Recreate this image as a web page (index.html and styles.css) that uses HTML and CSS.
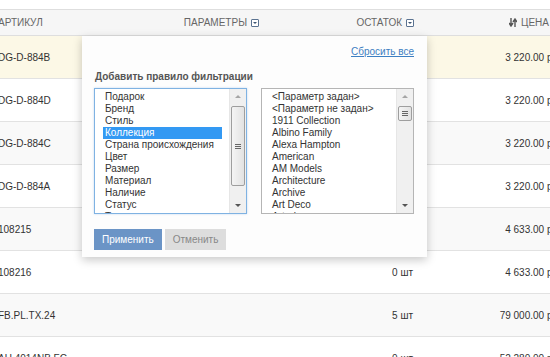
FILE: index.html
```html
<!DOCTYPE html>
<html lang="ru">
<head>
    <meta charset="UTF-8">
    <title>Товары</title>
    <link rel="stylesheet" href="styles.css">
</head>
<body>
    <div class="page">
        <div class="table">
            <div class="row head">
                <div class="cell">Артикул</div>
                <div class="cell right">Параметры <span class="filter-icon"></span></div>
                <div class="cell right">Остаток <span class="filter-icon"></span></div>
                <div class="cell price-head">
                    <svg class="sort-icon" width="8" height="9" viewBox="0 0 8 9"><path d="M2 0v7M0 5l2 3 2-3M6 9V2M4 4l2-3 2 3" stroke="#555" stroke-width="1.4" fill="none"/></svg>
                    Цена
                </div>
            </div>
            <div class="row hover">
                <div class="cell">DG-D-884B</div><div class="cell"></div><div class="cell right"></div><div class="cell price">3 220.00 руб.</div>
            </div>
            <div class="row">
                <div class="cell">DG-D-884D</div><div class="cell"></div><div class="cell right"></div><div class="cell price">3 220.00 руб.</div>
            </div>
            <div class="row odd">
                <div class="cell">DG-D-884C</div><div class="cell"></div><div class="cell right"></div><div class="cell price">3 220.00 руб.</div>
            </div>
            <div class="row">
                <div class="cell">DG-D-884A</div><div class="cell"></div><div class="cell right"></div><div class="cell price">3 220.00 руб.</div>
            </div>
            <div class="row odd">
                <div class="cell">108215</div><div class="cell"></div><div class="cell right"></div><div class="cell price">4 633.00 руб.</div>
            </div>
            <div class="row">
                <div class="cell">108216</div><div class="cell"></div><div class="cell right">0 шт</div><div class="cell price">4 633.00 руб.</div>
            </div>
            <div class="row odd">
                <div class="cell">FB.PL.TX.24</div><div class="cell"></div><div class="cell right">5 шт</div><div class="cell price">79 000.00 руб.</div>
            </div>
            <div class="row">
                <div class="cell">AU.4014NB.FC</div><div class="cell"></div><div class="cell right">0 шт</div><div class="cell price">52 280.00 руб.</div>
            </div>
        </div>

        <div class="popup">
            <div class="popup-top"><a href="#">Сбросить все</a></div>
            <div class="popup-title">Добавить правило фильтрации</div>
            <div class="lists">
                <div class="listbox focus">
                    <div class="options">
                        <div>Подарок</div>
                        <div>Бренд</div>
                        <div>Стиль</div>
                        <div class="selected">Коллекция</div>
                        <div>Страна происхождения</div>
                        <div>Цвет</div>
                        <div>Размер</div>
                        <div>Материал</div>
                        <div>Наличие</div>
                        <div>Статус</div>
                        <div>Тип</div>
                    </div>
                    <div class="scrollbar">
                        <span class="arrow up"></span>
                        <div class="track"><div class="thumb big"><span class="grip"></span></div></div>
                        <span class="arrow down"></span>
                    </div>
                </div>
                <div class="listbox">
                    <div class="options">
                        <div>&lt;Параметр задан&gt;</div>
                        <div>&lt;Параметр не задан&gt;</div>
                        <div>1911 Collection</div>
                        <div>Albino Family</div>
                        <div>Alexa Hampton</div>
                        <div>American</div>
                        <div>AM Models</div>
                        <div>Architecture</div>
                        <div>Archive</div>
                        <div>Art Deco</div>
                        <div>Arteriors</div>
                    </div>
                    <div class="scrollbar">
                        <span class="arrow up"></span>
                        <div class="track"><div class="thumb small"><span class="grip"></span></div></div>
                        <span class="arrow down"></span>
                    </div>
                </div>
            </div>
            <div class="actions">
                <button class="apply">Применить</button>
                <button class="cancel">Отменить</button>
            </div>
        </div>
    </div>
</body>
</html>
```

FILE: styles.css
```css
body {
    margin: 0;
    background-color: #fff;
    font-family: "Liberation Sans", Arial, sans-serif;
    font-size: 10px;
    color: #333;
    overflow: hidden;
}

.page {
    position: relative;
    width: 550px;
    height: 357px;
    overflow: hidden;
    padding-top: 9px;
    box-sizing: border-box;
}

.table {
    margin-left: -12px;
    width: 602px;
}

.row {
    display: grid;
    grid-template-columns: 192px 90px 155px 165px;
    height: 42px;
    align-items: center;
    border-bottom: 1px solid #e2e2e2;
}

.row.head {
    height: 25px;
    background-color: #f6f6f6;
    border-top: 1px solid #dedede;
    border-bottom: 1px solid #dedede;
    color: #666;
    text-transform: uppercase;
}

.row.hover {
    background-color: #fcf8e6;
}

.row.odd {
    background-color: #f9f9f9;
}

.cell {
    padding: 0 10px;
    white-space: nowrap;
}

.cell.right {
    text-align: right;
    padding-right: 12px;
}

.head .cell.right {
    display: flex;
    justify-content: flex-end;
    align-items: center;
    gap: 4px;
    padding-right: 11px;
}

.filter-icon {
    position: relative;
    display: inline-block;
    flex-shrink: 0;
    width: 6px;
    height: 6px;
    border: 1px solid #5b7391;
    border-radius: 1px;
    background-color: #fff;
}

.filter-icon::after {
    content: "";
    position: absolute;
    left: 1px;
    top: 2px;
    border-left: 2px solid transparent;
    border-right: 2px solid transparent;
    border-top: 2px solid #3d5573;
}

.price-head {
    display: flex;
    align-items: center;
    gap: 4px;
    padding-left: 84px;
}

.cell.price {
    text-align: right;
    padding-right: 24px;
}

.popup {
    position: absolute;
    left: 82px;
    top: 36px;
    width: 345px;
    height: 221px;
    box-sizing: border-box;
    padding: 10px 13px 0 12px;
    background-color: #fdfdfd;
    box-shadow: 0 3px 9px rgba(0, 0, 0, 0.22);
}

.popup-top {
    text-align: right;
    height: 14px;
}

.popup-top a {
    color: #3d7fc2;
}

.popup-title {
    margin-top: 11px;
    margin-left: 1px;
    line-height: 12px;
    font-weight: bold;
    color: #555;
}

.lists {
    display: flex;
    gap: 14px;
    margin-top: 5px;
}

.listbox {
    display: flex;
    width: 153px;
    height: 126px;
    box-sizing: border-box;
    border: 1px solid #b5b5b5;
    background-color: #fff;
    overflow: hidden;
}

.listbox.focus {
    border-color: #7fb2e2;
    box-shadow: 0 0 2px rgba(80, 150, 220, 0.35);
}

.options {
    flex: 1;
    padding: 2px 7px 0 8px;
    line-height: 12px;
    color: #333;
    overflow: hidden;
}

.options div {
    padding-left: 2px;
    white-space: nowrap;
}

.options .selected {
    background-color: #3399f3;
    color: #fff;
}

.scrollbar {
    display: flex;
    flex-direction: column;
    align-items: center;
    width: 16px;
    background-color: #f0f0f0;
    border-left: 1px solid #e6e6e6;
}

.arrow {
    display: block;
    width: 0;
    height: 0;
    margin: 6px 0;
    border-left: 3px solid transparent;
    border-right: 3px solid transparent;
}

.arrow.up {
    border-bottom: 3px solid #a5a5a5;
}

.arrow.down {
    border-top: 3px solid #555;
}

.track {
    flex: 1;
    width: 100%;
}

.thumb {
    display: flex;
    align-items: center;
    justify-content: center;
    margin: 2px 1px 0;
    border: 1px solid #9e9e9e;
    border-radius: 2px;
    background: linear-gradient(to right, #f4f4f4, #e2e2e2);
}

.thumb.big {
    height: 78px;
}

.thumb.small {
    height: 13px;
}

.grip {
    display: block;
    width: 6px;
    height: 5px;
    border-top: 1px solid #666;
    border-bottom: 1px solid #666;
    box-sizing: border-box;
    background: linear-gradient(#666, #666) center / 100% 1px no-repeat;
}

.actions {
    display: flex;
    gap: 3px;
    margin-top: 15px;
}

.actions button {
    height: 21px;
    padding: 0 8px;
    border: none;
    font-family: "Liberation Sans", Arial, sans-serif;
    font-size: 10px;
    cursor: pointer;
}

.apply {
    background-color: #6b94c6;
    color: #fff;
}

.cancel {
    background-color: #dddddd;
    color: #888;
}
```
